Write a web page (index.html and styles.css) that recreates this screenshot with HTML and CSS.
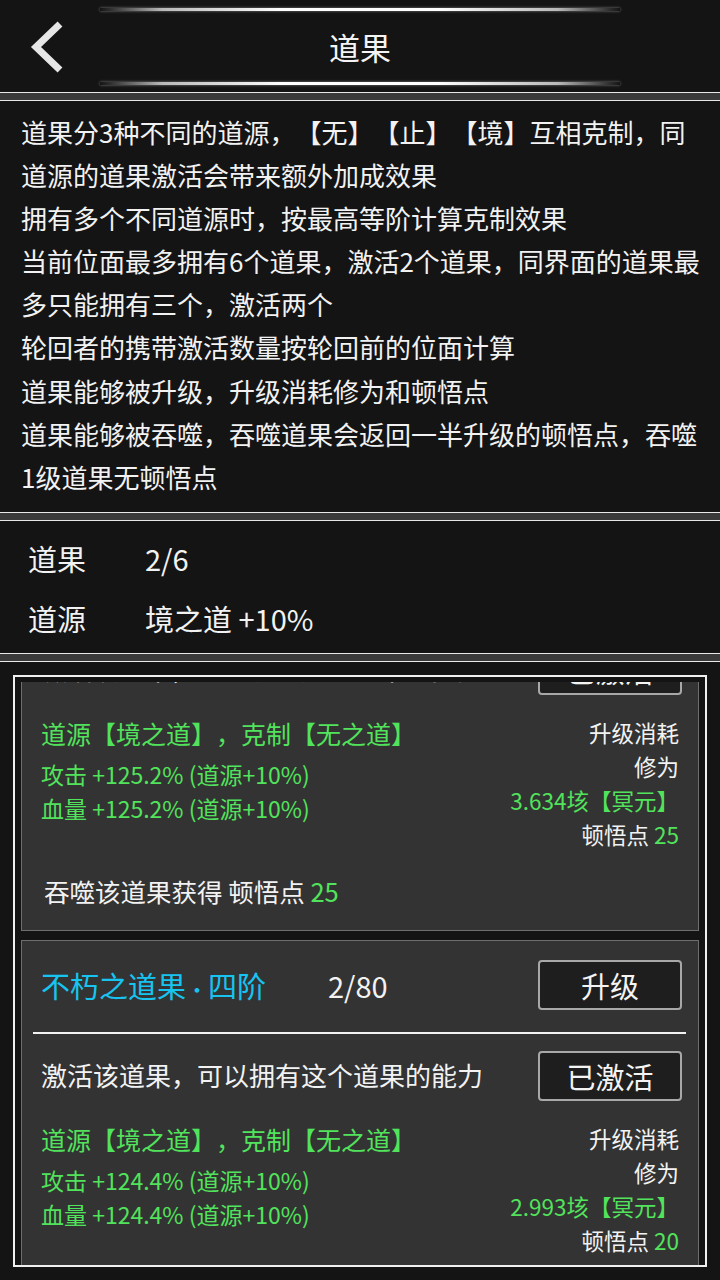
FILE: index.html
```html
<!DOCTYPE html>
<html lang="zh-CN">
<head>
<meta charset="utf-8">
<title>道果</title>
<link rel="stylesheet" href="styles.css">
</head>
<body>
<div class="screen">
  <header class="topbar">
    <div class="glow"></div>
    <div class="bar-row">
      <div class="back">
        <svg width="36" height="52" viewBox="0 0 36 52"><polyline points="31,3 7,26 31,49" fill="none" stroke="#e6e6e6" stroke-width="7" stroke-linejoin="miter" stroke-linecap="butt"/></svg>
      </div>
      <h1 class="title">道果</h1>
      <div></div>
    </div>
    <div class="glow"></div>
  </header>
  <div class="sep"></div>
  <section class="rules">
    <p>道果分3种不同的道源，【无】【止】【境】互相克制，同<br>道源的道果激活会带来额外加成效果<br>拥有多个不同道源时，按最高等阶计算克制效果<br>当前位面最多拥有6个道果，激活2个道果，同界面的道果最<br>多只能拥有三个，激活两个<br>轮回者的携带激活数量按轮回前的位面计算<br>道果能够被升级，升级消耗修为和顿悟点<br>道果能够被吞噬，吞噬道果会返回一半升级的顿悟点，吞噬<br>1级道果无顿悟点</p>
  </section>
  <div class="sep"></div>
  <section class="summary">
    <div class="sum-row"><span class="sum-label">道果</span><span>2/6</span></div>
    <div class="sum-row"><span class="sum-label">道源</span><span>境之道 +10%</span></div>
  </section>
  <div class="sep"></div>
  <section class="list-panel">
    <div class="list-frame">
      <div class="viewport">
        <div class="list">
          <div class="card">
            <div class="row head scrolled-out">
              <span class="name">不灭之道果<span class="dot">·</span>五阶</span>
              <span class="level">3/80</span>
              <span class="btn">升级</span>
            </div>
            <div class="divider"></div>
            <div class="row">
              <span class="desc">激活该道果，可以拥有这个道果的能力</span>
              <span class="btn">已激活</span>
            </div>
            <div class="stats">
              <div class="left">
                <div class="origin">道源【境之道】，克制【无之道】</div>
                <div class="attr first">攻击 +125.2% (道源+10%)</div>
                <div class="attr">血量 +125.2% (道源+10%)</div>
              </div>
              <div class="right">
                <div>升级消耗</div>
                <div>修为</div>
                <div class="green">3.634垓【冥元】</div>
                <div>顿悟点 <span class="green">25</span></div>
              </div>
            </div>
            <div class="devour">吞噬该道果获得 顿悟点 <span class="green">25</span></div>
          </div>
          <div class="card">
            <div class="row head">
              <span class="name">不朽之道果<span class="dot">·</span>四阶</span>
              <span class="level">2/80</span>
              <span class="btn">升级</span>
            </div>
            <div class="divider"></div>
            <div class="row">
              <span class="desc">激活该道果，可以拥有这个道果的能力</span>
              <span class="btn">已激活</span>
            </div>
            <div class="stats">
              <div class="left">
                <div class="origin">道源【境之道】，克制【无之道】</div>
                <div class="attr first">攻击 +124.4% (道源+10%)</div>
                <div class="attr">血量 +124.4% (道源+10%)</div>
              </div>
              <div class="right">
                <div>升级消耗</div>
                <div>修为</div>
                <div class="green">2.993垓【冥元】</div>
                <div>顿悟点 <span class="green">20</span></div>
              </div>
            </div>
            <div class="devour">吞噬该道果获得 顿悟点 <span class="green">20</span></div>
          </div>
        </div>
      </div>
    </div>
  </section>
</div>
</body>
</html>
```

FILE: styles.css
```css
* { box-sizing: border-box; }

html, body {
  margin: 0;
  padding: 0;
  background: #141414;
}

body {
  font-family: "Noto Sans CJK SC", "Noto Sans", sans-serif;
  color: #f0f0f0;
  text-spacing-trim: space-all;
}

.screen {
  width: 720px;
  height: 1280px;
  overflow: hidden;
  background: #141414;
}

/* header */
.topbar {
  height: 92px;
  padding-top: 8px;
  display: flex;
  flex-direction: column;
  align-items: center;
}

.glow {
  width: 520px;
  height: 3px;
  background: linear-gradient(to right, rgba(255,255,255,0) 0%, rgba(255,255,255,0.7) 12%, #ffffff 35%, #ffffff 65%, rgba(255,255,255,0.7) 88%, rgba(255,255,255,0) 100%);
  box-shadow: 0 0 3px rgba(200,200,200,0.6);
}

.bar-row {
  width: 100%;
  height: 71px;
  display: grid;
  grid-template-columns: 1fr auto 1fr;
  align-items: center;
}

.back {
  padding-left: 29px;
  display: flex;
  align-items: center;
}

.back svg { display: block; }

.title {
  margin: 0;
  font-size: 31px;
  font-weight: 400;
  line-height: 40px;
  color: #f4f4f4;
}

/* separators */
.sep {
  height: 9px;
  background: #3a3a3a;
  border-top: 1px solid #e8e8e8;
  border-bottom: 1px solid #e8e8e8;
}

/* rules */
.rules {
  height: 411px;
  padding: 9px 0 0 21px;
}

.rules p {
  margin: 0;
  font-size: 26px;
  line-height: 43.1px;
  white-space: nowrap;
  color: #f2f2f2;
}

/* summary */
.summary {
  height: 132px;
  padding: 7px 0 0 28px;
}

.sum-row {
  display: flex;
  height: 60px;
  align-items: center;
  font-size: 29px;
  line-height: 60px;
  color: #f2f2f2;
}

.sum-label {
  width: 117px;
}

/* list */
.list-panel {
  height: 618px;
  padding-top: 13px;
}

.list-frame {
  margin-left: 13px;
  width: 694px;
  height: 592px;
  border: 2px solid #f0f0f0;
  padding: 5px 6px 0 6px;
}

.viewport {
  height: 583px;
  overflow: hidden;
}

.list {
  margin-top: -148px;
  display: flex;
  flex-direction: column;
  gap: 9px;
}

.card {
  background: #333333;
  border: 1px solid #6e6e6e;
  padding: 0 16px 19px 19px;
}

.row {
  display: flex;
  align-items: center;
  height: 50px;
  margin-top: 17px;
}

.row.head {
  margin-top: 19px;
}

.scrolled-out {
  visibility: hidden;
}

.name {
  width: 287px;
  font-size: 29px;
  color: #17c4f0;
  white-space: nowrap;
}

.dot {
  font-size: 22px;
}

.level {
  font-size: 29px;
  color: #f2f2f2;
}

.desc {
  font-size: 26px;
  color: #f2f2f2;
  white-space: nowrap;
  padding-bottom: 4px;
}

.btn {
  margin-left: auto;
  width: 144px;
  height: 50px;
  background: #1e1e1e;
  border: 2px solid #a8a8a8;
  border-radius: 4px;
  display: flex;
  align-items: center;
  justify-content: center;
  font-size: 29px;
  color: #f4f4f4;
}

.divider {
  height: 2px;
  margin: 22px -4px 0 -8px;
  background: #f2f2f2;
}

.stats {
  margin-top: 18px;
  display: flex;
  justify-content: space-between;
  align-items: flex-start;
}

.left {
  color: #52e35c;
}

.origin {
  font-size: 25px;
  line-height: 40px;
  white-space: nowrap;
}

.attr {
  font-size: 23px;
  line-height: 34px;
  white-space: nowrap;
}

.attr.first {
  margin-top: 4px;
}

.right {
  padding-top: 2px;
  margin-right: 3px;
  text-align: right;
  font-size: 22.5px;
  line-height: 34px;
  color: #f2f2f2;
}

.green {
  color: #52e35c;
}

.devour {
  margin-top: 20px;
  padding-left: 3px;
  font-size: 25.5px;
  line-height: 40px;
  color: #f2f2f2;
}
```
